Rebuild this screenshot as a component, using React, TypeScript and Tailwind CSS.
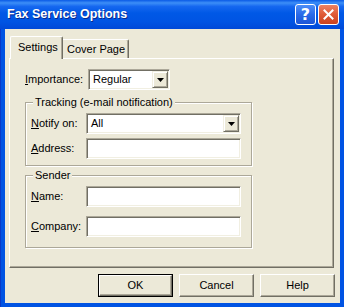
import React from "react";

const sunken =
  "border border-t-[#aca899] border-l-[#aca899] border-b-white border-r-white shadow-[inset_1px_1px_0_#716f64,inset_-1px_-1px_0_#f1efe2] bg-white";

function Arrow() {
  return (
    <div className="w-[16px] h-[17px] flex items-center justify-center bg-[#ece9d8] border border-t-[#f1efe2] border-l-[#f1efe2] border-r-[#716f64] border-b-[#716f64] shadow-[inset_1px_1px_0_#fff,inset_-1px_-1px_0_#aca899]">
      <svg width="7" height="4" viewBox="0 0 7 4">
        <polygon points="0,0 7,0 3.5,4" fill="#000" />
      </svg>
    </div>
  );
}

function Combo({ value, w }: { value: string; w: string }) {
  return (
    <div className={`${w} h-[21px] ${sunken} flex items-center p-[1px]`}>
      <div className="flex-1 pl-[3px] leading-[13px]">{value}</div>
      <Arrow />
    </div>
  );
}

function Edit() {
  return <div className={`w-[155px] h-[21px] ${sunken}`} />;
}

function Btn({ label, def }: { label: string; def?: boolean }) {
  if (def) {
    return (
      <div className="w-[75px] h-[23px] border border-black">
        <div className="w-full h-full flex items-center justify-center bg-[#ece9d8] border border-t-white border-l-white border-r-[#716f64] border-b-[#716f64] shadow-[inset_-1px_-1px_0_#aca899]">
          {label}
        </div>
      </div>
    );
  }
  return (
    <div className="w-[75px] h-[23px] flex items-center justify-center bg-[#ece9d8] border border-t-white border-l-white border-r-[#716f64] border-b-[#716f64] shadow-[inset_-1px_-1px_0_#aca899]">
      {label}
    </div>
  );
}

function Row({ label, children }: { label: React.ReactNode; children: React.ReactNode }) {
  return (
    <div className="flex items-center">
      <div className="w-[60px] pl-[5px] leading-[13px]">{label}</div>
      {children}
    </div>
  );
}

export default function App() {
  return (
    <div className="w-[344px] h-[307px] flex flex-col font-['Liberation_Sans',Arial,sans-serif] text-[11px] text-black select-none overflow-hidden">
      {/* Title bar */}
      <div className="h-[29px] flex items-center pl-[7px] pr-[5px] bg-[linear-gradient(180deg,#0a5ae6_0%,#3d8ff7_10%,#1668f0_22%,#0058e6_45%,#0054e3_75%,#0049d8_100%)]">
        <div className="flex-1 text-white font-bold text-[12.5px] leading-[15px] [text-shadow:1px_1px_0_#0a2a8c]">
          Fax Service Options
        </div>
        <div className="flex items-center gap-[2px]">
          <div className="w-[21px] h-[21px] rounded-[3px] border border-white bg-[linear-gradient(180deg,#4d8ef8_0%,#2a6ae8_50%,#1b55d6_100%)] flex items-center justify-center text-white font-bold text-[16px] leading-none font-['DejaVu_Sans',sans-serif]">
            ?
          </div>
          <div className="w-[21px] h-[21px] rounded-[3px] border border-white bg-[linear-gradient(180deg,#ec8263_0%,#df5a36_50%,#c9421f_100%)] flex items-center justify-center">
            <svg width="11" height="11" viewBox="0 0 11 11">
              <path d="M1.5 1.5 L9.5 9.5 M9.5 1.5 L1.5 9.5" stroke="#fff" strokeWidth="2" strokeLinecap="square" />
            </svg>
          </div>
        </div>
      </div>

      {/* Frame + body */}
      <div className="flex-1 bg-[#0053e3] px-[4px] pb-[4px] border-l border-[#0838c8]">
        <div className="h-full bg-[#ece9d8] pt-[7px] pl-[4px] pr-[6px] flex flex-col">
          {/* Tabs */}
          <div className="h-[22px] flex items-end pl-[1px]">
            <div className="relative z-10 w-[53px] h-[23px] mb-[-1px] bg-[#ece9d8] border-t border-l border-r border-t-white border-l-white border-r-[#716f64] shadow-[inset_-1px_0_0_#aca899] rounded-t-[2px] pl-[7px] pt-[4px] leading-[13px]">
              Settings
            </div>
            <div className="w-[66px] h-[19px] bg-[#ece9d8] border-t border-r border-t-white border-r-[#716f64] shadow-[inset_-1px_0_0_#aca899] rounded-tr-[2px] pl-[4px] flex items-center leading-[13px]">
              Cover Page
            </div>
          </div>

          {/* Panel */}
          <div className="h-[210px] border border-t-white border-l-white border-r-[#716f64] border-b-[#716f64] shadow-[inset_-1px_-1px_0_#aca899] pl-[15px] pt-[10px] flex flex-col items-start">
            <div className="flex items-center h-[21px]">
              <div className="w-[63px] leading-[13px]">
                <span className="underline">I</span>mportance:
              </div>
              <Combo value="Regular" w="w-[82px]" />
            </div>

            <fieldset className="mt-[6px] w-[227px] border border-[#aca899] shadow-[inset_1px_1px_0_#fff,1px_1px_0_#fff] pt-[4px] pb-[6px] flex flex-col gap-[4px]">
              <legend className="ml-[7px] px-[2px] leading-[13px] bg-[#ece9d8]">
                Tracking (e-mail notification)
              </legend>
              <Row label={<><span className="underline">N</span>otify on:</>}>
                <Combo value="All" w="w-[155px]" />
              </Row>
              <Row label={<><span className="underline">A</span>ddress:</>}>
                <Edit />
              </Row>
            </fieldset>

            <fieldset className="mt-[3px] w-[227px] border border-[#aca899] shadow-[inset_1px_1px_0_#fff,1px_1px_0_#fff] pt-[4px] pb-[10px] flex flex-col gap-[9px]">
              <legend className="ml-[7px] px-[2px] leading-[13px] bg-[#ece9d8]">Sender</legend>
              <Row label={<><span className="underline">N</span>ame:</>}>
                <Edit />
              </Row>
              <Row label={<><span className="underline">C</span>ompany:</>}>
                <Edit />
              </Row>
            </fieldset>
          </div>

          {/* Buttons */}
          <div className="mt-[6px] flex justify-end gap-[6px] pr-0 mr-[-1px]">
            <Btn label="OK" def />
            <Btn label="Cancel" />
            <Btn label="Help" />
          </div>
        </div>
      </div>
    </div>
  );
}
